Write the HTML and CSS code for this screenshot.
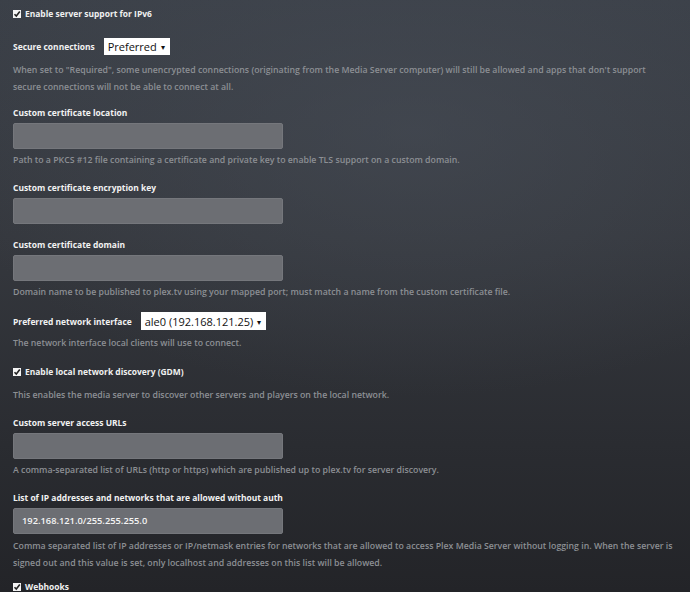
FILE: index.html
```html
<!DOCTYPE html>
<html>
<head>
<meta charset="utf-8">
<link rel="stylesheet" href="styles.css">
</head>
<body>
<div class="page">
  <div class="check-row first">
    <span class="box"><svg viewBox="0 0 8 8" width="8" height="8"><path d="M1.5 4.2 L3.3 6 L6.8 1.6" fill="none" stroke="#222" stroke-width="1.6"/></svg></span>
    <span class="check-label">Enable server support for IPv6</span>
  </div>

  <div class="select-row sec">
    <span class="label">Secure connections</span>
    <span class="select">Preferred <span class="caret">▾</span></span>
  </div>
  <p class="desc tight">When set to "Required", some unencrypted connections (originating from the Media Server computer) will still be allowed and apps that don't support secure connections will not be able to connect at all.</p>

  <div class="setting s-first">
    <div class="label">Custom certificate location</div>
    <div class="input"></div>
    <p class="desc">Path to a PKCS #12 file containing a certificate and private key to enable TLS support on a custom domain.</p>
  </div>

  <div class="setting">
    <div class="label">Custom certificate encryption key</div>
    <div class="input"></div>
  </div>

  <div class="setting s-domain">
    <div class="label">Custom certificate domain</div>
    <div class="input"></div>
    <p class="desc">Domain name to be published to plex.tv using your mapped port; must match a name from the custom certificate file.</p>
  </div>

  <div class="select-row net">
    <span class="label">Preferred network interface</span>
    <span class="select">ale0 (192.168.121.25) <span class="caret">▾</span></span>
  </div>
  <p class="desc d-net">The network interface local clients will use to connect.</p>

  <div class="check-row mid">
    <span class="box"><svg viewBox="0 0 8 8" width="8" height="8"><path d="M1.5 4.2 L3.3 6 L6.8 1.6" fill="none" stroke="#222" stroke-width="1.6"/></svg></span>
    <span class="check-label">Enable local network discovery (GDM)</span>
  </div>
  <p class="desc tight">This enables the media server to discover other servers and players on the local network.</p>

  <div class="setting">
    <div class="label">Custom server access URLs</div>
    <div class="input"></div>
    <p class="desc">A comma-separated list of URLs (http or https) which are published up to plex.tv for server discovery.</p>
  </div>

  <div class="setting">
    <div class="label">List of IP addresses and networks that are allowed without auth</div>
    <div class="input filled">192.168.121.0/255.255.255.0</div>
    <p class="desc d-ip">Comma separated list of IP addresses or IP/netmask entries for networks that are allowed to access Plex Media Server without logging in. When the server is signed out and this value is set, only localhost and addresses on this list will be allowed.</p>
  </div>

  <div class="check-row last">
    <span class="box"><svg viewBox="0 0 8 8" width="8" height="8"><path d="M1.5 4.2 L3.3 6 L6.8 1.6" fill="none" stroke="#222" stroke-width="1.6"/></svg></span>
    <span class="check-label">Webhooks</span>
  </div>
</div>
</body>
</html>
```
FILE: styles.css
```css
html, body {
  margin: 0;
  padding: 0;
  height: 100%;
}
body {
  background:
    radial-gradient(ellipse 70% 45% at 60% 22%, rgba(72,78,88,0.55), rgba(72,78,88,0) 100%),
    linear-gradient(180deg, #3b4048 0%, #35383e 40%, #2a2c31 75%, #232428 100%);
  font-family: "Open Sans", "Noto Sans", sans-serif;
  color: #eeeeee;
  overflow: hidden;
}
.page {
  padding: 5px 15px 0 13px;
}
.check-row {
  display: flex;
  align-items: center;
  gap: 4px;
  height: 17px;
  font-size: 8.45px;
  font-weight: 700;
  color: #f0f0f0;
}
.check-row.mid { margin-top: 11px; }
.check-row.last { margin-top: 6px; }
.box {
  width: 8px;
  height: 8px;
  background: #f4f4f4;
  display: inline-flex;
  align-items: center;
  justify-content: center;
}
.box svg { display: block; }
.select-row {
  display: flex;
  align-items: center;
  gap: 9px;
}
.select-row.sec { margin-top: 16px; height: 17px; }
.select-row.net { margin-top: 11px; height: 18px; }
.select-row .select { height: 100%; }
.label {
  font-size: 8.45px;
  font-weight: 700;
  color: #f2f2f2;
  line-height: 17px;
}
.select {
  background: #ffffff;
  color: #111;
  font-size: 11px;
  line-height: 17px;
  padding: 0 5px 0 4px;
  display: inline-flex;
  align-items: center;
  gap: 4px;
}
.caret {
  font-size: 8px;
}
.desc {
  margin: 3px 0 0 0;
  font-size: 8.75px;
  font-weight: 600;
  color: #8c8f94;
  line-height: 17px;
}
.desc.tight { margin-top: 7px; }
.desc.d-net { margin-top: 5px; }
.desc.d-ip { margin-top: 4px; }
.setting { margin-top: 10px; }
.setting.s-first { margin-top: 8px; }
.setting.s-domain { margin-top: 12px; }
.input {
  box-sizing: border-box;
  width: 270px;
  height: 26px;
  margin-top: 2px;
  background: #6c6e73;
  border: 1px solid #75777c;
  border-radius: 2px;
  font-size: 9.3px;
  font-weight: 600;
  color: #f4f4f4;
  line-height: 24px;
  padding-left: 8px;
}
```
